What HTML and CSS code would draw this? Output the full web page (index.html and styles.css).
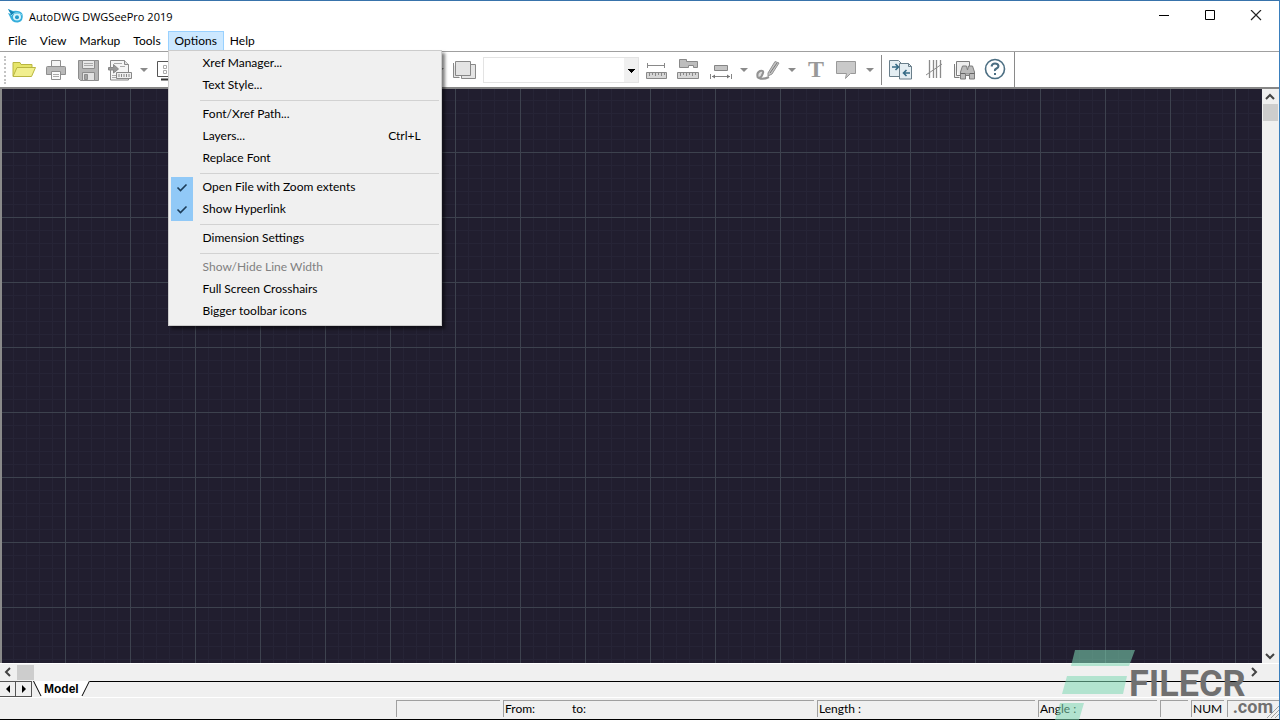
FILE: index.html
```
<!DOCTYPE html>
<html lang="en">
<head>
    <meta charset="UTF-8">
    <meta name="viewport" content="width=device-width, initial-scale=1.0">
    <title>AutoDWG DWGSeePro 2019</title>
    <link rel="stylesheet" href="styles.css">
</head>
<body>
    <div class="window">
        <header class="titlebar">
            <svg class="app-icon" width="16" height="16" viewBox="0 0 16 16">
                <path d="M0 1 L5 3 Q12 2 14.500 6 Q16 13 10 14.500 Q4 15 2 9 L0 5 L3 6Z" fill="#35aedb"/>
                <path d="M0 1 L7 5 L4 8Z" fill="#1583b4"/>
                <ellipse cx="9" cy="9" rx="4" ry="3.400" fill="#d8f4fc"/>
                <circle cx="9" cy="9.300" r="2" fill="#2499c9"/>
                <path d="M3 8 Q8 2 14 7" fill="none" stroke="#8cdcf3"/>
            </svg>
            <span class="title">AutoDWG DWGSeePro 2019</span>
            <div class="window-buttons">
                <button aria-label="Minimize"><svg width="12" height="12"><path d="M1 5.500h10" stroke="#000"/></svg></button>
                <button aria-label="Maximize"><svg width="12" height="12"><path d="M1.500 .5h9v9h-9z" stroke="#000" fill="none"/></svg></button>
                <button aria-label="Close"><svg width="12" height="12"><path d="M1 0l10 10M11 0L1 10" stroke="#222" stroke-width="1.200"/></svg></button>
            </div>
        </header>

        <nav class="menubar">
            <button>File</button>
            <button>View</button>
            <button>Markup</button>
            <button>Tools</button>
            <div class="menu-holder">
                <button class="open">Options</button>
                <div class="menu">
                    <button>Xref Manager...</button>
                    <button>Text Style...</button>
                    <hr>
                    <button>Font/Xref Path...</button>
                    <button>Layers...<span class="shortcut">Ctrl+L</span></button>
                    <button>Replace Font</button>
                    <hr>
                    <button class="checked"><svg class="check" width="22" height="22"><path d="M6.500 10.500l3 3 6-6" fill="none" stroke="#1c3c58" stroke-width="1.600"/></svg>Open File with Zoom extents</button>
                    <button class="checked"><svg class="check" width="22" height="22"><path d="M6.500 10.500l3 3 6-6" fill="none" stroke="#1c3c58" stroke-width="1.600"/></svg>Show Hyperlink</button>
                    <hr>
                    <button>Dimension Settings</button>
                    <hr>
                    <button disabled>Show/Hide Line Width</button>
                    <button>Full Screen Crosshairs</button>
                    <button>Bigger toolbar icons</button>
                </div>
            </div>
            <button>Help</button>
        </nav>

        <div class="toolbar">
            <span class="grip"></span>
            <button aria-label="Open">
                <svg width="24" height="24" viewBox="0 0 24 24">
                    <path d="M1 18V4.500h7l1 2h11V10" fill="#e6e56a" stroke="#b9b640"/>
                    <path d="M1 18.500L5 9.500h18.500l-4 9z" fill="#f1ef8e" stroke="#b9b640"/>
                </svg>
            </button>
            <button aria-label="Print">
                <svg width="24" height="24" viewBox="0 0 24 24" stroke="#8f8f8f">
                    <path d="M7.500 9V2.500h9V9" fill="#f4f4f4"/>
                    <path d="M2.500 9.500q0-1 1-1h17q1 0 1 1v7h-19z" fill="#b9b9b9"/>
                    <path d="M7.500 13.500h9v8h-9z" fill="#fafafa"/>
                    <path d="M9 16.500h6M9 18.500h6" stroke="#aaa"/>
                </svg>
            </button>
            <button aria-label="Save">
                <svg width="24" height="24" viewBox="0 0 24 24" stroke="#8d8d8d">
                    <path d="M2.500 2.500h20v20h-18l-2-2z" fill="#b4b4b4"/>
                    <path d="M6.500 2.500h12v8h-12z" fill="#e8e8e8"/>
                    <path d="M8 5.500h9M8 7.500h9" stroke="#aaa"/>
                    <path d="M6.500 14.500h12v8h-12z" fill="#e2e2e2"/>
                    <path d="M8.500 16.500h3v5h-3z" fill="#a2a2a2"/>
                </svg>
            </button>
            <button aria-label="Export">
                <svg width="24" height="24" viewBox="0 0 24 24" stroke="#888">
                    <path d="M2.500 2.500h14l4 4v15.500h-18z" fill="#f5f5f5"/>
                    <path d="M16.500 2.500v4h4" fill="#ddd"/>
                    <path d="M6 5.500h8M12 8.500h5M4 17.500h4M4 19.500h4" stroke="#aaa"/>
                    <path d="M.5 9.500h5v-3l5 4.500-5 4v-3h-5z" fill="#999"/>
                    <path d="M8.500 14.500h15v6h-15z" fill="#eee"/>
                    <path d="M11 16v3M13.500 16v3M16 16v3M18.500 16v3M21 16v3"/>
                </svg>
            </button>
            <button class="drop" aria-label="Export options"><span class="arrow"></span></button>
            <button aria-label="Full screen">
                <svg width="24" height="24" viewBox="0 0 24 24" fill="none" stroke="#555">
                    <path d="M1.500 3.500h21v15h-21z"/>
                    <path d="M5 21.500h14" stroke="#333" stroke-width="2"/>
                    <path d="M7.500 7.500h3v3h-3zM13.500 7.500h3v3h-3zM7.500 12.500h3v3h-3z" stroke="#aaa"/>
                </svg>
            </button>
            <div class="toolbar-gap"></div>
            <button class="drop" aria-label="View options"><span class="arrow"></span></button>
            <button aria-label="Layers">
                <svg width="24" height="24" viewBox="0 0 24 24" fill="#e4e4e4" stroke="#888">
                    <path d="M1.500 5v14.500h6M9.500 6.500h14v14h-14z"/>
                    <path d="M3.500 3.500h15v14h-15z"/>
                </svg>
            </button>
            <select class="layer-select" aria-label="Layer"><option></option></select>
            <button aria-label="Measure length">
                <svg width="24" height="24" viewBox="0 0 24 24" fill="#d6d6d6" stroke="#898989">
                    <path d="M3 7.500h17M3.500 5v5M20.500 5v5"/>
                    <path d="M2.500 14.500h20v6h-20z"/>
                    <path d="M5.500 15v3M8.500 15v2M11.500 15v3M14.500 15v2M17.500 15v3M20.500 15v2"/>
                </svg>
            </button>
            <button aria-label="Measure area">
                <svg width="24" height="24" viewBox="0 0 24 24" fill="#bdbdbd" stroke="#898989">
                    <path d="M3.500 1.500h7v2h11v6h-4v-2h-5v2h-9z"/>
                    <path d="M1.500 14.500h21v6h-21z" fill="#d6d6d6"/>
                    <path d="M4.500 15v3M7.500 15v2M10.500 15v3M13.500 15v2M16.500 15v3M19.500 15v2"/>
                </svg>
            </button>
            <button aria-label="Dimension">
                <svg width="24" height="24" viewBox="0 0 24 24" stroke="#858585">
                    <path d="M6.500 7.500h13v5h-13z" fill="#c4c4c4"/>
                    <path d="M2.500 16v5M23.500 16v5M4 18.500h18"/>
                    <path d="M4 18.500l3-2v4zM22 18.500l-3-2v4z" fill="#777" stroke="none"/>
                </svg>
            </button>
            <button class="drop" aria-label="Dimension options"><span class="arrow"></span></button>
            <button aria-label="Freehand">
                <svg width="24" height="24" viewBox="0 0 24 24" fill="none" stroke="#939393">
                    <path d="M2 20q-2-5 2-7 4-1 3 2-1 4-4 5 4 2 10-1" fill="#ddd" stroke-width="2"/>
                    <path d="M12 15L19 3.500l4 1.500-7 11-4 2z" fill="#c4c4c4"/>
                    <path d="M14 15L21 5" stroke="#777"/>
                </svg>
            </button>
            <button class="drop" aria-label="Freehand options"><span class="arrow"></span></button>
            <button aria-label="Text" class="text-tool">T</button>
            <button class="comment" aria-label="Comment">
                <svg width="24" height="24" viewBox="0 0 24 24">
                    <path d="M1.500 3.500h19v12h-5l-5 5 1-5h-10z" fill="#c9c9c9" stroke="#999"/>
                </svg>
            </button>
            <button class="drop" aria-label="Comment options"><span class="arrow"></span></button>
            <span class="divider"></span>
            <button aria-label="Compare">
                <svg width="24" height="24" viewBox="0 0 24 24" fill="#e4eef3" stroke="#6a7f8b">
                    <path d="M.5 2.500h9l3 3v13h-12z"/>
                    <path d="M10.500 5.500h9l3 3v12.500h-12z"/>
                    <path d="M19.500 5.500v3h3" fill="none"/>
                    <path d="M3 9h6M6.500 6L9.500 9l-3 3M21 15h-6M17.500 12l-3 3 3 3" fill="none" stroke="#356b86" stroke-width="1.600"/>
                </svg>
            </button>
            <button aria-label="Count">
                <svg width="24" height="24" viewBox="0 0 24 24" fill="none" stroke="#8b8b8b">
                    <path d="M8.500 2v18M12.500 2v18M15.500 2v18M19.500 2v18" stroke-width="1.300"/>
                    <path d="M5 17L21 6"/>
                </svg>
            </button>
            <button aria-label="Find">
                <svg width="24" height="24" viewBox="0 0 24 24" fill="#eee" stroke="#7d7d7d">
                    <path d="M1.500 6v13.500h5M3.500 3.500h13v14h-13z"/>
                    <path d="M7.500 21v-7l2-6h4l1 4 1-4h4l2 6v7h-5v-5h-4v5z" fill="#bbb"/>
                    <path d="M7.500 15.500h5M16.500 15.500h5" stroke="#666"/>
                </svg>
            </button>
            <button class="help" aria-label="Help">
                <svg width="24" height="24" viewBox="0 0 24 24" fill="none" stroke="#4b6e82" stroke-width="2">
                    <circle cx="11" cy="11" r="9.500" stroke-width="1.600"/>
                    <path d="M7.500 8.500q.5-3 3.500-3t3.500 2.500q0 1.500-2 2.500t-1.500 2.500M11 15v2"/>
                </svg>
            </button>
            <span class="divider last"></span>
        </div>

        <main class="workspace">
            <div class="drawing"></div>
            <div class="vscroll">
                <button aria-label="Scroll up"><svg width="10" height="8"><path d="M1 6l4-4 4 4" fill="none" stroke="#444" stroke-width="2"/></svg></button>
                <span class="thumb"></span>
                <button class="end" aria-label="Scroll down"><svg width="10" height="8"><path d="M1 2l4 4 4-4" fill="none" stroke="#444" stroke-width="2"/></svg></button>
            </div>
        </main>
        <div class="hscroll">
            <button aria-label="Scroll left"><svg width="8" height="10"><path d="M6 1L2 5l4 4" fill="none" stroke="#444" stroke-width="2"/></svg></button>
            <span class="thumb"></span>
            <button class="end" aria-label="Scroll right"><svg width="8" height="10"><path d="M2 1l4 4-4 4" fill="none" stroke="#444" stroke-width="2"/></svg></button>
        </div>

        <div class="tabs">
            <button class="tab-arrow" aria-label="Previous layout"><svg width="8" height="8"><path d="M6 0v8L2 4z"/></svg></button>
            <button class="tab-arrow" aria-label="Next layout"><svg width="8" height="8"><path d="M2 0v8l4-4z"/></svg></button>
            <button class="tab">
                <svg width="9" height="16"><path d="M0 0h9v16z" fill="#fff"/><path d="M.5 0L8 15" stroke="#000" fill="none"/></svg>
                <span>Model</span>
                <svg width="9" height="16"><path d="M0 0h9L1 16H0z" fill="#fff"/><path d="M1 15L8.500 0" stroke="#000" fill="none"/></svg>
            </button>
            <span class="tab-rest"></span>
        </div>

        <footer class="statusbar">
            <span class="message"></span>
            <span class="cell w-info"></span>
            <span class="cell w-points"><span class="from">From:</span>to:</span>
            <span class="cell w-length">Length :</span>
            <span class="cell w-angle">Angle :</span>
            <span class="cell w-caps"></span>
            <span class="cell w-num">NUM</span>
            <span class="cell w-scrl">
                <svg class="size-grip" width="14" height="14"><path d="M2 14L14 2M6 14l8-8M10 14l4-4" stroke="#a0a0a0"/></svg>
            </span>
        </footer>
    </div>

    <div class="watermark">
        <svg width="85" height="70" viewBox="0 0 85 70">
            <path d="M20 0h60l-6 16H16zM12 26h60l-4 18H7zM5 53h24l-5 17H0z" fill="#7fd8b4" fill-opacity=".55"/>
        </svg>
        <span class="brand">FILECR</span>
        <span class="domain">.com</span>
    </div>
</body>
</html>
```
FILE: styles.css
```
* {
    box-sizing: border-box;
}
body {
    margin: 0;
    height: 100vh;
    overflow: hidden;
    font-family: Lato, "Open Sans", sans-serif;
    font-size: 12px;
    color: #000;
}
button {
    margin: 0;
    padding: 0;
    border: 0;
    background: none;
    font: inherit;
    color: inherit;
}
svg {
    display: block;
}
.window {
    display: flex;
    flex-direction: column;
    height: 100vh;
    border-top: 1px solid #3873ab;
    border-right: 1px solid #3a7fbd;
    border-bottom: 1px solid #000;
    background: #fff;
}

/* title and menu */
.titlebar {
    display: flex;
    align-items: center;
    height: 30px;
    padding-left: 8px;
}
.title {
    margin-left: 5px;
    font-family: "Open Sans", sans-serif;
    font-size: 11px;
}
.window-buttons {
    display: flex;
    margin-left: auto;
}
.window-buttons button {
    display: flex;
    justify-content: center;
    align-items: center;
    width: 46px;
    height: 30px;
}
.menubar {
    display: flex;
    height: 20px;
    padding-left: 2px;
}
.menubar > button,
.menu-holder > button {
    height: 20px;
    padding: 0 7px 0 6px;
    line-height: 20px;
}
.menu-holder {
    position: relative;
}
.menu-holder > .open {
    padding: 0 6px;
    border: 1px solid #99d1ff;
    line-height: 18px;
    background: #cce8ff;
}
.menu {
    position: absolute;
    top: 19px;
    left: 0;
    z-index: 2;
    width: 274px;
    padding: 2px;
    border: 1px solid #ccc;
    background: #f0f0f0;
    box-shadow: 3px 3px 3px rgba(0, 0, 0, 0.5);
}
.menu button {
    display: flex;
    align-items: flex-start;
    width: 100%;
    height: 22px;
    padding: 0 18px 0 32px;
    line-height: 20px;
    text-align: left;
}
.menu button:disabled {
    color: #808080;
}
.menu .checked {
    padding-left: 0;
}
.check {
    margin-right: 10px;
    background: #91c9f7;
}
.shortcut {
    margin-left: auto;
}
.menu hr {
    height: 1px;
    margin: 3px 0 3px 29px;
    border: 0;
    background: #d2d2d2;
}

/* toolbar */
.toolbar {
    display: flex;
    align-items: center;
    height: 38px;
    border-top: 1px solid #a0a0a0;
    border-bottom: 2px solid #868686;
    background: #fff;
}
.toolbar button {
    display: flex;
    flex: none;
    justify-content: center;
    align-items: center;
    width: 32px;
    height: 32px;
}
.grip {
    width: 2px;
    height: 28px;
    margin: 0 2px 0 4px;
    border-left: 2px dotted #c4c4c4;
}
.toolbar .drop {
    width: 16px;
}
.arrow {
    border: 4px solid transparent;
    border-top-color: #8a8a8a;
    border-bottom: 0;
}
.toolbar-gap {
    width: 248px;
}
.layer-select {
    width: 156px;
    height: 26px;
    margin: 0 1px 0 3px;
    border: 1px solid #e3e3e3;
    border-radius: 0;
    appearance: none;
    background: linear-gradient(135deg, #000 50%, transparent 50%) right 2px top 11px / 4px 4px no-repeat,
        linear-gradient(225deg, #000 50%, transparent 50%) right 6px top 11px / 4px 4px no-repeat,
        linear-gradient(#f0f0f0, #f0f0f0) right / 14px 100% no-repeat,
        #fff;
}
.toolbar .text-tool {
    font: bold 24px "Liberation Serif", serif;
    color: #999;
}
.toolbar .comment,
.toolbar .help {
    width: 30px;
}
.divider {
    width: 1px;
    height: 30px;
    margin: 0 3px;
    background: #8a8a8a;
}
.divider.last {
    height: 35px;
}

/* drawing area */
.workspace {
    display: flex;
    flex: 1;
    min-height: 0;
    border-left: 2px solid #8a8a8a;
}
.drawing {
    flex: 1;
    background-color: #211e2f;
    background-image:
        linear-gradient(to right, #3d424e 1px, transparent 1px),
        linear-gradient(#3d424e 1px, transparent 1px),
        linear-gradient(to right, #262436 1px, transparent 1px),
        linear-gradient(#262436 1px, transparent 1px);
    background-size: 65px 65px, 65px 65px, 13px 13px, 13px 13px;
    background-position: 63px 63px, 63px 63px, 11px 11px, 11px 11px;
}
.vscroll,
.hscroll {
    display: flex;
    background: #f0f0f0;
}
.vscroll {
    flex-direction: column;
    width: 17px;
}
.vscroll button,
.hscroll button {
    display: flex;
    justify-content: center;
    align-items: center;
    width: 16px;
    height: 15px;
}
.thumb {
    background: #cdcdcd;
}
.vscroll .thumb {
    height: 17px;
    margin: 0 1px;
}
.vscroll .end {
    margin-top: auto;
}
.hscroll {
    height: 18px;
    padding: 0 17px 1px 0;
    border-top: 1px solid #fff;
    align-items: center;
}
.hscroll .thumb {
    width: 17px;
    height: 15px;
    margin-left: 1px;
}
.hscroll .end {
    margin-left: auto;
}

/* layout tabs */
.tabs {
    display: flex;
    height: 16px;
    background: #f0f0f0;
}
.tab-arrow {
    display: flex;
    justify-content: center;
    align-items: center;
    width: 16px;
    border: solid #555;
    border-width: 1px 1px 1px 0;
}
.tabs .tab {
    display: flex;
    margin-left: 1px;
    font: bold 12px "Liberation Sans", sans-serif;
}
.tab span {
    padding: 0 2px;
    line-height: 16px;
    background: #fff;
}
.tab-rest {
    flex: 1;
    border-top: 1px solid #000;
}

/* status bar */
.statusbar {
    display: flex;
    gap: 3px;
    height: 22px;
    padding: 2px 0;
    border-top: 1px solid #fff;
    background: #f0f0f0;
}
.message {
    flex: 1;
}
.cell {
    padding-left: 1px;
    border-top: 1px solid #a0a0a0;
    border-left: 1px solid #a0a0a0;
    line-height: 16px;
    white-space: nowrap;
}
.w-info {
    width: 104px;
}
.w-points {
    width: 311px;
}
.w-length {
    width: 218px;
}
.w-angle {
    width: 119px;
}
.w-caps {
    width: 28px;
}
.w-num {
    width: 33px;
}
.w-scrl {
    width: 52px;
}
.size-grip {
    margin: 3px 0 0 auto;
}
.from {
    display: inline-block;
    width: 67px;
}

/* overlay brand */
.watermark {
    position: absolute;
    right: 0;
    bottom: 0;
    z-index: 3;
    width: 225px;
    height: 70px;
    font-family: Roboto, sans-serif;
    font-weight: bold;
    color: #707070;
    pointer-events: none;
}
.brand {
    position: absolute;
    top: 13px;
    left: 74px;
    font-size: 36px;
    line-height: 42px;
}
.domain {
    position: absolute;
    right: 7px;
    bottom: 2px;
    font-size: 18px;
    line-height: 22px;
}
```
